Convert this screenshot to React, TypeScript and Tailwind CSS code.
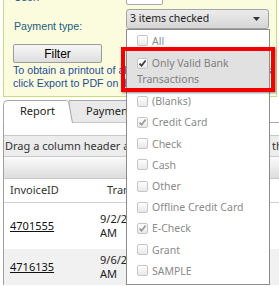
const options = [
  { label: "All", checked: false },
  { label: "Only Valid Bank Transactions", checked: true, active: true },
  { label: "(Blanks)", checked: false },
  { label: "Credit Card", checked: true },
  { label: "Check", checked: false },
  { label: "Cash", checked: false },
  { label: "Other", checked: false },
  { label: "Offline Credit Card", checked: false },
  { label: "E-Check", checked: true },
  { label: "Grant", checked: false },
  { label: "SAMPLE", checked: false },
];

const rows = [
  { id: "4701555", date: "9/2/2019 10:41:07", ampm: "AM", tall: true },
  { id: "4716135", date: "9/6/2019 9:12:55", ampm: "AM", tall: false },
];

const CheckBox = ({ checked, dark }: { checked: boolean; dark?: boolean }) => (
  <span className="inline-flex h-[11px] w-[11px] items-center justify-center rounded-[2px] border border-[#c6c6c6] bg-linear-to-b from-white to-[#e8e8e8] align-[-1px]">
    {checked && (
      <svg width="9" height="9" viewBox="0 0 9 9">
        <path d="M1.5 4.6 L3.6 6.7 L7.6 1.6" fill="none" stroke={dark ? "#3a3a3a" : "#9a9a9a"} strokeWidth="1.7" />
      </svg>
    )}
  </span>
);

const Caret = () => (
  <svg width="7" height="4" viewBox="0 0 7 4">
    <path d="M0 0 H7 L3.5 4 Z" fill="#333" />
  </svg>
);

export default function App() {
  return (
    <div className="relative h-[287px] w-[279px] overflow-hidden bg-white font-['Liberation_Sans',Arial,sans-serif]">
      {/* filter panel */}
      <div className="ml-[3px] mt-[-16px] w-[274px] border-x border-b border-[#c9dc7f] bg-[#fbfbde] pl-[9px] pt-[3px] pb-[6px]">
        <div className="flex h-[18px]">
          <div className="w-[113px] pl-[1px] pt-[4px] text-[10.67px] leading-[12px] text-[#23607e]">User:</div>
          <div className="flex h-[18px] w-[37px] items-center justify-between rounded-[2px] border border-[#a9a9a9] bg-white px-[3px] font-['Noto_Sans',sans-serif] text-[11px] text-[#222]">
            <span>All</span>
            <Caret />
          </div>
        </div>
        <div className="mt-[4px] flex">
          <div className="w-[113px] pl-[1px] pt-[11px] text-[10.67px] leading-[12px] text-[#23607e]">Payment type:</div>
          <div className="flex h-[20px] w-[143px] items-center justify-between rounded-[3px] border border-[#a3a3a3] bg-linear-to-b from-[#ececec] to-[#d6d6d6] pl-[3px] pr-[8px] font-['Noto_Sans',sans-serif] text-[10.5px] text-[#222]">
            <span>3 items checked</span>
            <Caret />
          </div>
        </div>
        <button className="mt-[12px] flex h-[19px] w-[89px] items-center justify-center rounded-[2px] border border-[#9c9c9c] bg-linear-to-b from-[#f7f7f7] to-[#dedede] text-[12px] text-black">
          Filter
        </button>
        <div className="mt-[1px] whitespace-nowrap text-[10.67px] leading-[13px] text-[#1f4f97]">
          To obtain a printout of all transactions in this report, first
          <br />
          click Export to PDF on the toolbar below the grid.
        </div>
      </div>

      {/* tabs */}
      <div className="mt-[3px] ml-[3px] flex h-[23px] border-b border-[#a7a7a7] font-['Noto_Sans',sans-serif] text-[11px] text-[#222]">
        <div className="relative z-10 flex h-[23px] w-[70px] items-center pl-[17px]">
          <svg className="absolute inset-0" width="70" height="23" viewBox="0 0 70 23">
            <path d="M0.5 23 V4.5 Q0.5 0.5 4.5 0.5 H63.5 Q65 0.5 65.6 2 L69.5 23" fill="white" stroke="#a7a7a7" />
          </svg>
          <span className="relative">Report</span>
        </div>
        <div className="relative -ml-[4px] flex h-[23px] w-[100px] items-center pl-[17px]">
          <svg className="absolute inset-0" width="100" height="23" viewBox="0 0 100 23">
            <path d="M0 0.5 H99.5 V23 H0 Z" fill="#e9e9e9" stroke="#a7a7a7" />
          </svg>
          <span className="relative">Payment Types</span>
        </div>
      </div>

      {/* grid */}
      <div className="ml-[3px] border-l border-[#a0a0a0] font-['Noto_Sans',sans-serif] text-[11px] text-[#333]">
        <div className="h-[12px]" />
        <div className="flex h-[22px] items-center justify-between whitespace-nowrap border-y border-[#c9c9c9] bg-[#ececec] pl-[1px] pr-[2px]">
          <span>Drag a column header and drop it here to group by that</span>
          <span className="text-[#e8902a]">◂</span>
        </div>
        <div className="h-[22px] border-b border-[#c9c9c9] bg-linear-to-b from-[#fafafa] to-[#dedede]" />
        <div className="flex h-[24px] items-center border-b border-[#d2d2d2]">
          <div className="w-[96px] pl-[6px]">InvoiceID</div>
          <div className="pl-[7px]">Transaction Date</div>
        </div>
        {rows.map((r) => (
          <div
            key={r.id}
            className={`flex items-center ${r.tall ? "h-[46px] bg-white" : "h-[36px] bg-[#f1f1f1]"}`}
          >
            <div className="w-[96px] pl-[6px]">
              <a className="text-[#111] underline">{r.id}</a>
            </div>
            <div className="w-[60px] leading-[14px] text-[#222]">
              {r.date.split(" ")[0]}
              <br />
              {r.ampm}
            </div>
          </div>
        ))}
      </div>

      {/* dropdown list */}
      <div className="absolute left-[126px] top-[29px] w-[144px] border border-[#8c8c8c] bg-white pb-[3px] font-['Noto_Sans',sans-serif] text-[10.5px] leading-[16px] text-[#8a8a8a]">
        {options.map((o) =>
          o.active ? (
            <div key={o.label} className="bg-[#e1e1e1] pt-[4px] pb-[3.5px] pl-[10px] pr-[4px] text-[#808080]">
              <CheckBox checked dark /> <span className="ml-[1px]">{o.label}</span>
            </div>
          ) : (
            <div key={o.label} className="flex h-[21.2px] items-center gap-[4px] pl-[10px]">
              <CheckBox checked={o.checked} />
              <span>{o.label}</span>
            </div>
          )
        )}
      </div>

      {/* highlight annotation */}
      <div className="absolute left-[121px] top-[47px] h-[45px] w-[154px] border-4 border-[#f40000] shadow-[1px_1px_2px_rgba(0,0,0,0.45)]" />
    </div>
  );
}
